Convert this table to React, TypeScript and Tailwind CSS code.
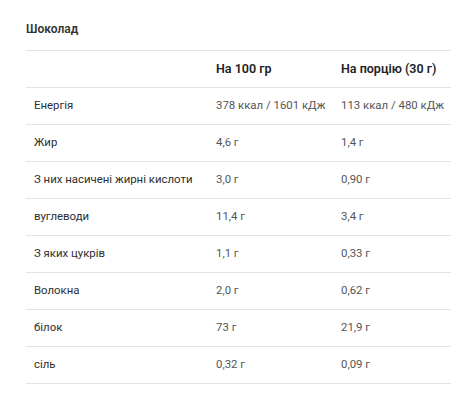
const ROWS: [string, string, string][] = [
  ["Енергія", "378 ккал / 1601 кДж", "113 ккал / 480 кДж"],
  ["Жир", "4,6 г", "1,4 г"],
  ["З них насичені жирні кислоти", "3,0 г", "0,90 г"],
  ["вуглеводи", "11,4 г", "3,4 г"],
  ["З яких цукрів", "1,1 г", "0,33 г"],
  ["Волокна", "2,0 г", "0,62 г"],
  ["білок", "73 г", "21,9 г"],
  ["сіль", "0,32 г", "0,09 г"],
];

export default function App() {
  return (
    <div className="w-[474px] h-[408px] bg-white font-['Roboto','Noto_Sans',sans-serif] text-[11.4px]">
      <div className="px-[26px] pt-[20px]">
        <h2 className="text-[12px] font-semibold text-[#333] leading-[18px] pb-[12px]">
          Шоколад
        </h2>
        <div className="border-t border-[#e2e2e2] w-[425px]">
          <div className="grid grid-cols-[182px_125px_118px] h-[37px] items-center border-b border-[#e2e2e2] font-semibold text-[#222] text-[12.5px]">
            <div />
            <div className="px-2">На 100 гр</div>
            <div className="px-2">На порцію (30 г)</div>
          </div>
          {ROWS.map(([label, per100, perServ]) => (
            <div
              key={label}
              className="grid grid-cols-[182px_125px_118px] h-[37px] items-center border-b border-[#e2e2e2]"
            >
              <div className="px-2 text-[#2e2e2e] whitespace-nowrap">{label}</div>
              <div className="px-2 text-[#555] whitespace-nowrap">{per100}</div>
              <div className="px-2 text-[#555] whitespace-nowrap">{perServ}</div>
            </div>
          ))}
        </div>
      </div>
    </div>
  );
}
